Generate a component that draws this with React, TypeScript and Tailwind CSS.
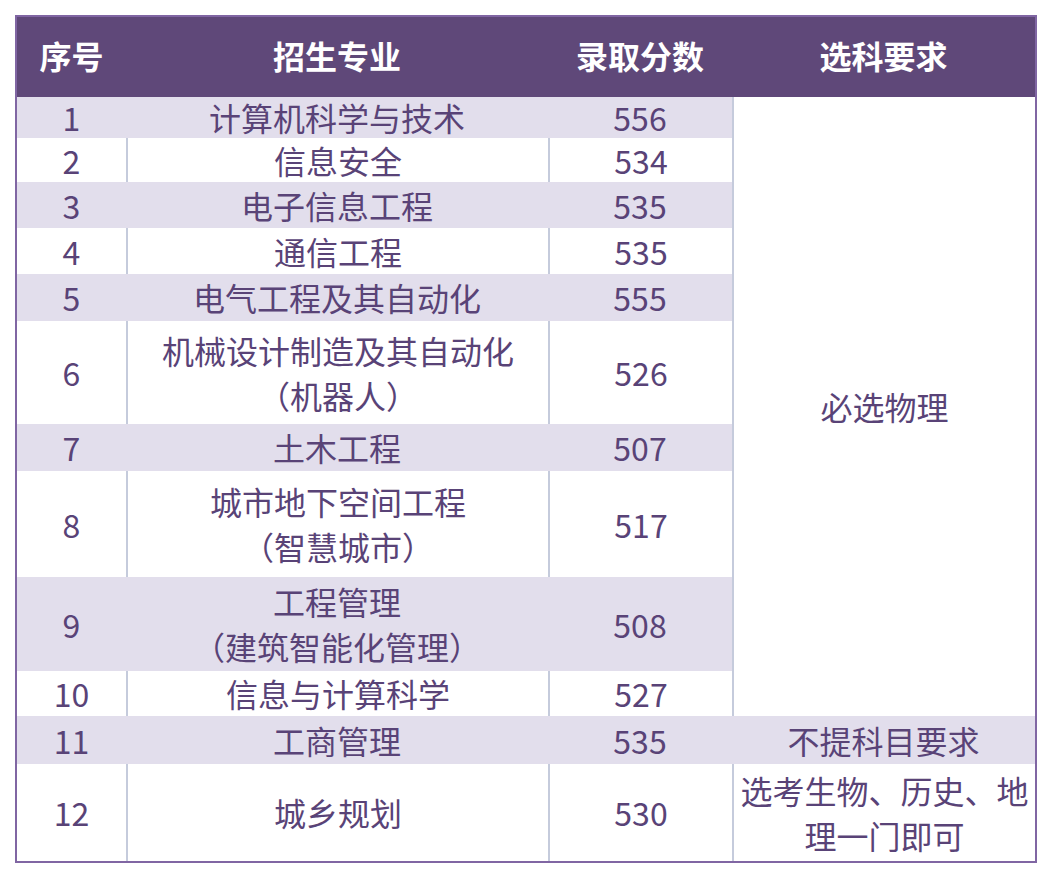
import type { FC } from "react"

interface Row {
  no: string
  major: string[]
  score: string
  h: number
  shaded: boolean
}

const rows: Row[] = [
  { no: "1", major: ["计算机科学与技术"], score: "556", h: 41, shaded: true },
  { no: "2", major: ["信息安全"], score: "534", h: 44, shaded: false },
  { no: "3", major: ["电子信息工程"], score: "535", h: 46, shaded: true },
  { no: "4", major: ["通信工程"], score: "535", h: 46, shaded: false },
  { no: "5", major: ["电气工程及其自动化"], score: "555", h: 47, shaded: true },
  { no: "6", major: ["机械设计制造及其自动化", "（机器人）"], score: "526", h: 103, shaded: false },
  { no: "7", major: ["土木工程"], score: "507", h: 47, shaded: true },
  { no: "8", major: ["城市地下空间工程", "（智慧城市）"], score: "517", h: 106, shaded: false },
  { no: "9", major: ["工程管理", "（建筑智能化管理）"], score: "508", h: 94, shaded: true },
  { no: "10", major: ["信息与计算科学"], score: "527", h: 45, shaded: false },
  { no: "11", major: ["工商管理"], score: "535", h: 48, shaded: true },
  { no: "12", major: ["城乡规划"], score: "530", h: 97, shaded: false },
]

const font = { fontFamily: '"Noto Sans CJK SC", "Noto Sans", sans-serif' }

// 单元格：浅色行没有竖线，白色行有浅灰蓝竖线
const Cell: FC<{ shaded: boolean; line?: boolean; children: React.ReactNode }> = ({
  shaded,
  line,
  children,
}) => (
  <div
    className={`flex flex-col items-center justify-center px-1 text-center ${
      shaded ? "bg-[#e2deec]" : "bg-white"
    } ${line && !shaded ? "border-l-2 border-[#c5cbdc]" : ""}`}
  >
    {children}
  </div>
)

const App: FC = () => {
  const rowTemplate = ["80px", ...rows.map((r) => `${r.h}px`)].join(" ")

  return (
    <div className="h-[880px] w-[1052px] bg-white pl-[15px] pt-[15px]" style={font}>
      <div className="w-[1022px] border-2 border-[#8066a3]">
        <div
          className="grid grid-cols-[109px_422px_184px_303px] text-[32px] leading-[45px] text-[#594377]"
          style={{ gridTemplateRows: rowTemplate }}
        >
          {/* 表头 */}
          {["序号", "招生专业", "录取分数", "选科要求"].map((t) => (
            <div
              key={t}
              className="flex items-center justify-center bg-[#5f4879] pb-1 font-bold text-white"
            >
              {t}
            </div>
          ))}

          {rows.map((r, i) => (
            <div key={r.no} className="contents">
              <Cell shaded={r.shaded}>{r.no}</Cell>
              <Cell shaded={r.shaded} line>
                {r.major.map((m) => (
                  <span key={m}>{m}</span>
                ))}
              </Cell>
              <Cell shaded={r.shaded} line>
                {r.score}
              </Cell>
              {i === 0 && (
                <div
                  className="row-span-10 flex items-center justify-center border-l-2 border-[#c5cbdc] bg-white"
                >
                  必选物理
                </div>
              )}
              {i === 10 && <Cell shaded>不提科目要求</Cell>}
              {i === 11 && (
                <Cell shaded={false} line>
                  <span className="whitespace-nowrap">选考生物、历史、地</span>
                  <span>理一门即可</span>
                </Cell>
              )}
            </div>
          ))}
        </div>
      </div>
    </div>
  )
}

export default App
